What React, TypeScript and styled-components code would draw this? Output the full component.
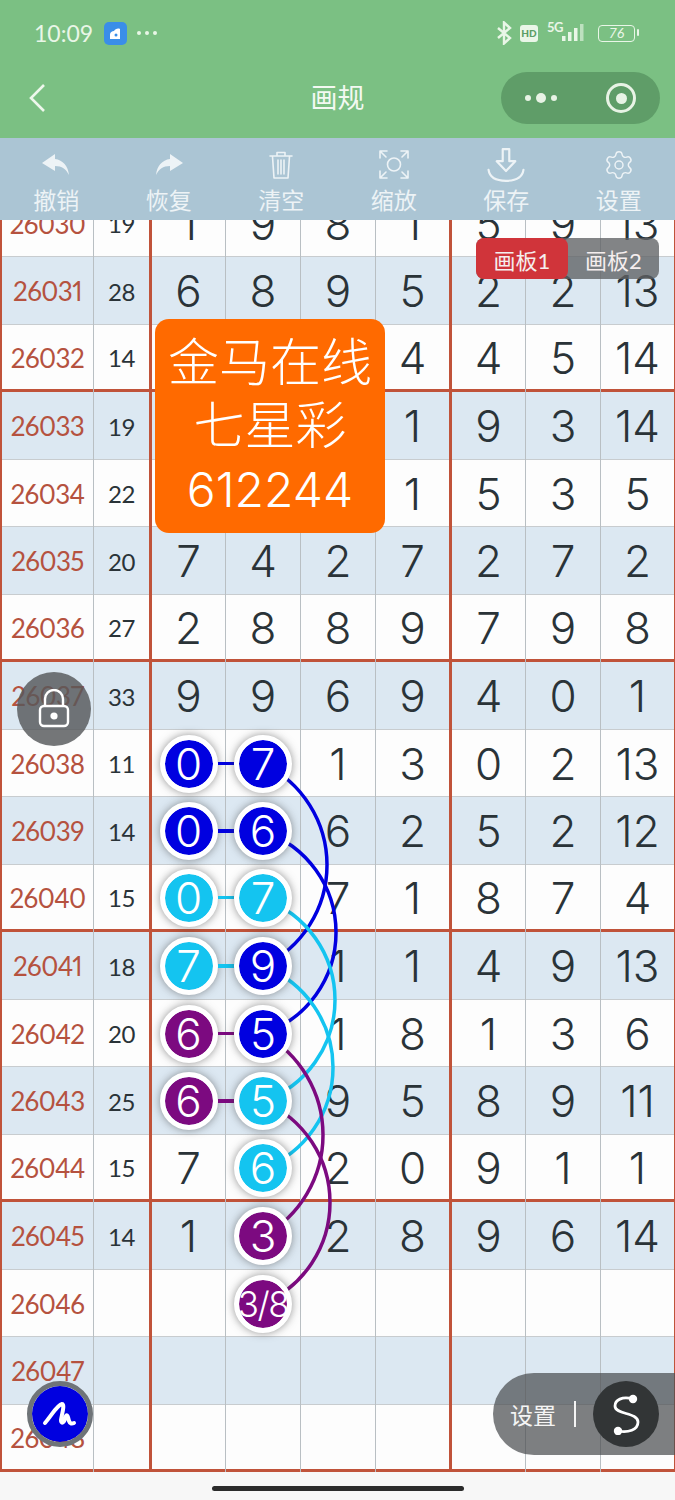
import React from "react";
import styled, { createGlobalStyle } from "styled-components";
import { Settings } from "lucide-react";

const ROW_H = 67.5;
const BLUE = "#0000e0";
const CYAN = "#14c4f0";
const PURPLE = "#7c0a80";

interface RowType {
  id: number;
  sum?: number;
  nums: (number | string | null)[];
  end?: boolean;
}

const rows: RowType[] = [
  { id: 26030, sum: 19, nums: [1, 9, 8, 1, 5, 9, 13] },
  { id: 26031, sum: 28, nums: [6, 8, 9, 5, 2, 2, 13] },
  { id: 26032, sum: 14, nums: [null, null, null, 4, 4, 5, 14], end: true },
  { id: 26033, sum: 19, nums: [null, null, null, 1, 9, 3, 14] },
  { id: 26034, sum: 22, nums: [null, null, null, 1, 5, 3, 5] },
  { id: 26035, sum: 20, nums: [7, 4, 2, 7, 2, 7, 2] },
  { id: 26036, sum: 27, nums: [2, 8, 8, 9, 7, 9, 8], end: true },
  { id: 26037, sum: 33, nums: [9, 9, 6, 9, 4, 0, 1] },
  { id: 26038, sum: 11, nums: [0, 7, 1, 3, 0, 2, 13] },
  { id: 26039, sum: 14, nums: [0, 6, 6, 2, 5, 2, 12] },
  { id: 26040, sum: 15, nums: [0, 7, 7, 1, 8, 7, 4], end: true },
  { id: 26041, sum: 18, nums: [7, 9, 1, 1, 4, 9, 13] },
  { id: 26042, sum: 20, nums: [6, 5, 1, 8, 1, 3, 6] },
  { id: 26043, sum: 25, nums: [6, 5, 9, 5, 8, 9, 11] },
  { id: 26044, sum: 15, nums: [7, 6, 2, 0, 9, 1, 1], end: true },
  { id: 26045, sum: 14, nums: [1, 3, 2, 8, 9, 6, 14] },
  { id: 26046, nums: [null, "3/8", null, null, null, null, null] },
  { id: 26047, nums: [null, null, null, null, null, null, null] },
  { id: 26048, nums: [null, null, null, null, null, null, null], end: true },
];

// 标记的球: 行id -> [第一列颜色, 第二列颜色]
const marks: Record<number, (string | null)[]> = {
  26038: [BLUE, BLUE],
  26039: [BLUE, BLUE],
  26040: [CYAN, CYAN],
  26041: [CYAN, BLUE],
  26042: [PURPLE, BLUE],
  26043: [PURPLE, CYAN],
  26044: [null, CYAN],
  26045: [null, PURPLE],
  26046: [null, PURPLE],
};

const curves = [
  { from: 26038, color: BLUE, sag: 64 },
  { from: 26039, color: BLUE, sag: 73 },
  { from: 26040, color: CYAN, sag: 72 },
  { from: 26041, color: CYAN, sag: 70 },
  { from: 26042, color: PURPLE, sag: 60 },
  { from: 26043, color: PURPLE, sag: 67 },
];

const GlobalStyle = createGlobalStyle`
  html, body {
    margin: 0;
    padding: 0;
    background: #f7f7f7;
    font-family: "Lato", "Noto Sans CJK SC", sans-serif;
  }
`;

const Page = styled.div`
  position: relative;
  width: 675px;
  height: 1500px;
  display: flex;
  flex-direction: column;
  overflow: hidden;
`;

const Header = styled.header`
  background: #7bc083;
  color: #fff;
  height: 138px;
  flex: none;
`;

const StatusBar = styled.div`
  height: 66px;
  padding: 0 40px 0 34px;
  display: flex;
  align-items: center;
  justify-content: space-between;
  color: #e9f6e7;
`;

const StatusGroup = styled.div`
  display: flex;
  align-items: center;
`;

const Time = styled.span`
  font-size: 23px;
  margin-right: 11px;
`;

const AppIcon = styled.span`
  width: 23px;
  height: 23px;
  border-radius: 5px;
  background: #3a8ee8;
  display: flex;
  align-items: center;
  justify-content: center;
  margin-right: 10px;
`;

const Dots = styled.span`
  display: flex;
  gap: 4px;
  i {
    width: 4px;
    height: 4px;
    border-radius: 50%;
    background: #e9f6e7;
  }
`;

const HdBadge = styled.span`
  width: 18px;
  height: 17px;
  margin: 0 9px 0 8px;
  border-radius: 3px;
  background: #eaf6e8;
  color: #5c9e66;
  font-size: 10px;
  font-weight: 900;
  display: flex;
  align-items: center;
  justify-content: center;
`;

const Net = styled.span`
  width: 15px;
  font-size: 13px;
  font-weight: 700;
  line-height: 12px;
  letter-spacing: -0.5px;
  align-self: flex-start;
`;

const Battery = styled.span`
  width: 37px;
  height: 17px;
  margin-left: 14px;
  box-sizing: border-box;
  border: 1.5px solid #e9f6e7;
  border-radius: 4px;
  font-size: 14px;
  font-style: italic;
  line-height: 14px;
  text-align: center;
  position: relative;
  &::after {
    content: "";
    position: absolute;
    right: -5px;
    top: 3px;
    width: 2px;
    height: 7px;
    border-radius: 1px;
    background: #e9f6e7;
  }
`;

const NavBar = styled.div`
  height: 72px;
  display: grid;
  grid-template-columns: minmax(0, 1fr) auto minmax(0, 1fr);
  align-items: center;
  padding: 0 15px 8px 15px;
  box-sizing: border-box;
  > svg {
    margin-left: 13px;
  }
`;

const Title = styled.h1`
  margin: 0 0 4px;
  font-size: 27px;
  font-weight: 400;
  color: #f3f9f2;
`;

const Capsule = styled.div`
  justify-self: end;
  width: 159px;
  height: 52px;
  border-radius: 26px;
  background: #5f9d68;
  display: flex;
  align-items: center;
  justify-content: space-between;
  padding: 0 24px 0 24px;
  box-sizing: border-box;
`;

const CapsuleDots = styled.span`
  display: flex;
  align-items: center;
  gap: 5px;
  i {
    width: 6px;
    height: 6px;
    border-radius: 50%;
    background: #e8f3e5;
  }
  i:nth-child(2) {
    width: 10px;
    height: 10px;
  }
`;

const Target = styled.span`
  width: 30px;
  height: 30px;
  box-sizing: border-box;
  border: 3.5px solid #e8f3e5;
  border-radius: 50%;
  display: flex;
  align-items: center;
  justify-content: center;
  &::after {
    content: "";
    width: 11px;
    height: 11px;
    border-radius: 50%;
    background: #e8f3e5;
  }
`;

const Toolbar = styled.nav`
  height: 82px;
  flex: none;
  background: #abc5d4;
  display: grid;
  grid-template-columns: repeat(6, 1fr);
  position: relative;
  z-index: 3;
`;

const ToolItem = styled.div`
  height: 82px;
  display: flex;
  flex-direction: column;
  align-items: center;
  color: #edf3f6;
  font-size: 23px;
  line-height: 30px;
`;

const ToolIcon = styled.span`
  height: 36px;
  margin-top: 9px;
  margin-bottom: 2px;
  display: flex;
  align-items: center;
`;

const Viewport = styled.main`
  height: 1252px;
  flex: none;
  overflow: hidden;
`;

const Table = styled.div`
  position: relative;
  margin-top: -30.5px;
`;

const Row = styled.div<{ $odd: boolean; $end?: boolean }>`
  height: ${ROW_H}px;
  box-sizing: border-box;
  display: grid;
  grid-template-columns: 94px 58px 74px 75px 75px 76px 74px 75px 74px;
  background: ${(p) => (p.$odd ? "#dce8f2" : "#fdfdfd")};
  border-bottom: ${(p) => (p.$end ? "3px solid #c0533a" : "1.5px solid #c8cccf")};
`;

const Cell = styled.div<{ $heavy?: boolean; $edge?: boolean }>`
  display: flex;
  align-items: center;
  justify-content: center;
  box-sizing: border-box;
  margin-bottom: -3px;
  padding-bottom: 1.5px;
  border-right: ${(p) =>
    p.$heavy
      ? "3px solid #c0533a"
      : p.$edge
        ? "1.5px solid #c0533a"
        : "1.5px solid #b9bfc3"};
`;

const IdCell = styled(Cell)`
  border-left: 2px solid #c0533a;
  color: #b5523f;
  font-size: 26px;
  letter-spacing: -0.6px;
  font-variant-numeric: proportional-nums;
`;

const SumCell = styled(Cell)`
  color: #2a3338;
  font-size: 24px;
  letter-spacing: -0.5px;
`;

const NumCell = styled(Cell)`
  color: #2a3338;
  font-family: "Inter", "Noto Sans CJK SC", sans-serif;
  font-size: 44px;
  font-weight: 300;
`;

const Ball = styled.span<{ $color: string; $link?: boolean; $small?: boolean }>`
  position: relative;
  z-index: 2;
  flex: none;
  width: 58px;
  height: 58px;
  box-sizing: border-box;
  border: 5px solid #fff;
  border-radius: 50%;
  background: ${(p) => p.$color};
  background-clip: padding-box;
  color: #fff;
  font-size: ${(p) => (p.$small ? "35px" : "44px")};
  font-weight: 300;
  letter-spacing: ${(p) => (p.$small ? "-1.5px" : "0")};
  white-space: nowrap;
  display: flex;
  align-items: center;
  justify-content: center;
  box-shadow: 0 0 8px rgba(60, 60, 60, 0.55);
  &::after {
    content: "";
    display: ${(p) => (p.$link ? "block" : "none")};
    position: absolute;
    left: 100%;
    top: 50%;
    margin: -2px 0 0 5px;
    width: 16px;
    height: 3.5px;
    background: ${(p) => p.$color};
  }
`;

const Curves = styled.svg`
  position: absolute;
  left: 0;
  top: 0;
  z-index: 1;
  pointer-events: none;
`;

const Tabs = styled.div`
  position: absolute;
  left: 476px;
  top: 238px;
  width: 183px;
  height: 41px;
  z-index: 4;
  display: flex;
  border-radius: 8px;
  background: rgba(95, 98, 100, 0.78);
`;

const Tab = styled.span<{ $active?: boolean }>`
  width: ${(p) => (p.$active ? "92px" : "91px")};
  border-radius: 8px;
  background: ${(p) => (p.$active ? "#d0343a" : "transparent")};
  color: #f5eeee;
  font-size: 22px;
  display: flex;
  align-items: center;
  justify-content: center;
`;

const PromoCard = styled.div`
  position: absolute;
  left: 155px;
  top: 319px;
  width: 230px;
  height: 214px;
  z-index: 4;
  border-radius: 14px;
  background: #ff6a00;
  color: #fff;
  font-size: 51px;
  font-family: "Inter", "Noto Sans CJK SC", sans-serif;
  font-weight: 300;
  line-height: 63px;
  text-align: center;
  padding-top: 12px;
  box-sizing: border-box;
`;

const PromoCode = styled.span`
  font-size: 48px;
`;

const LockButton = styled.div`
  position: absolute;
  left: 17px;
  top: 672px;
  width: 74px;
  height: 74px;
  z-index: 4;
  border-radius: 50%;
  background: rgba(85, 88, 90, 0.82);
  display: flex;
  align-items: center;
  justify-content: center;
`;

const PenButton = styled.div`
  position: absolute;
  left: 27px;
  top: 1381px;
  width: 66px;
  height: 66px;
  z-index: 4;
  box-sizing: border-box;
  border: 5px solid #6f7478;
  border-radius: 50%;
  background: ${BLUE};
  background-clip: padding-box;
  display: flex;
  align-items: center;
  justify-content: center;
`;

const SettingPill = styled.div`
  position: absolute;
  right: 0;
  top: 1373px;
  width: 182px;
  height: 82px;
  z-index: 4;
  box-sizing: border-box;
  padding-left: 17px;
  border-radius: 41px 0 0 41px;
  background: rgba(75, 78, 80, 0.72);
  color: #f4f4f4;
  font-size: 23px;
  display: flex;
  align-items: center;
`;

const Divider = styled.i`
  width: 1.5px;
  height: 26px;
  background: #f4f4f4;
  margin: 0 17px 0 18px;
`;

const SButton = styled.span`
  width: 66px;
  height: 66px;
  border-radius: 50%;
  background: #323536;
  display: flex;
  align-items: center;
  justify-content: center;
`;

const HomeStrip = styled.div`
  flex: 1;
  display: flex;
  align-items: flex-end;
  justify-content: center;
  padding-bottom: 9px;
  box-sizing: border-box;
  background: #f7f7f7;
`;

const HomeBar = styled.i`
  width: 252px;
  height: 5px;
  border-radius: 3px;
  background: #2b2b2b;
`;

const iconStroke = {
  fill: "none",
  stroke: "#edf3f6",
  strokeWidth: 1.6,
  strokeLinecap: "round" as const,
  strokeLinejoin: "round" as const,
};

const tools = [
  {
    label: "撤销",
    icon: (
      <svg width="30" height="32" viewBox="0 0 30 32">
        <path d="M14 5 1 14l13 8v-5c7 0 11 3 14 9-1-9-6-15-14-16z" fill="#edf3f6" />
      </svg>
    ),
  },
  {
    label: "恢复",
    icon: (
      <svg width="30" height="32" viewBox="0 0 30 32">
        <path d="M16 5l13 9-13 8v-5c-7 0-11 3-14 9 1-9 6-15 14-16z" fill="#edf3f6" />
      </svg>
    ),
  },
  {
    label: "清空",
    icon: (
      <svg width="26" height="32" viewBox="0 0 26 32" {...iconStroke}>
        <path d="M2 7h22M9 6V3.500h8V6M4.500 7.500 6 29h14l1.500-21.500M10 11v14M13 11v14M16 11v14" />
      </svg>
    ),
  },
  {
    label: "缩放",
    icon: (
      <svg width="32" height="32" viewBox="0 0 32 32" {...iconStroke}>
        <circle cx="16" cy="15.500" r="6.500" />
        <path d="M2 9V2h7M2 2l6 6M30 9V2h-7M30 2l-6 6M2 22v7h7M2 29l6-6M30 22v7h-7M30 29l-6-6" />
      </svg>
    ),
  },
  {
    label: "保存",
    icon: (
      <svg width="40" height="36" viewBox="0 0 36 33" {...iconStroke} strokeWidth={2}>
        <path d="M15 2h6v11h5.500L18 22 9.500 13H15zM2 21c1 7 7 10 16 10s15-3 16-10" />
      </svg>
    ),
  },
  {
    label: "设置",
    icon: <Settings size={32} strokeWidth={1.1} color="#edf3f6" />,
  },
];

const rowCenter = (id: number) => (id - 26030) * ROW_H + ROW_H / 2;

const arcPath = (from: number, sag: number) => {
  const y1 = rowCenter(from);
  const y2 = y1 + 3 * ROW_H;
  const half = (y2 - y1) / 2;
  const r = (half * half + sag * sag) / (2 * sag);
  return `M263 ${y1} A${r} ${r} 0 0 1 263 ${y2}`;
};

function App() {
  return (
    <Page>
      <GlobalStyle />
      <Header>
        <StatusBar>
          <StatusGroup>
            <Time>10:09</Time>
            <AppIcon>
              <svg width="15" height="15" viewBox="0 0 15 15">
                <path d="M2 13V8.500C2 6.500 4 5 6 5c1-2 4-3 6-2v10z" fill="#fff" />
                <circle cx="8" cy="9" r="1.500" fill="#3a8ee8" />
              </svg>
            </AppIcon>
            <Dots>
              <i />
              <i />
              <i />
            </Dots>
          </StatusGroup>
          <StatusGroup>
            <svg width="16" height="24" viewBox="0 0 16 24" fill="none" stroke="#e9f6e7" strokeWidth="2.400">
              <path d="M2 7l12 10-6 5.500V1.500L14 7 2 17" />
            </svg>
            <HdBadge>HD</HdBadge>
            <Net>5G</Net>
            <svg width="22" height="20" viewBox="0 0 22 20" fill="#e9f6e7">
              <rect x="0" y="13" width="3.500" height="5" />
              <rect x="6" y="9" width="3.500" height="9" />
              <rect x="12" y="5" width="3.500" height="13" />
              <rect x="18" y="1" width="3.500" height="17" opacity="0.6" />
            </svg>
            <Battery>76</Battery>
          </StatusGroup>
        </StatusBar>
        <NavBar>
          <svg width="18" height="30" viewBox="0 0 18 30" fill="none" stroke="#eef7ec" strokeWidth="2.600">
            <path d="M16 2 3 15l13 13" />
          </svg>
          <Title>画规</Title>
          <Capsule>
            <CapsuleDots>
              <i />
              <i />
              <i />
            </CapsuleDots>
            <Target />
          </Capsule>
        </NavBar>
      </Header>
      <Toolbar>
        {tools.map((tool) => (
          <ToolItem key={tool.label}>
            <ToolIcon>{tool.icon}</ToolIcon>
            {tool.label}
          </ToolItem>
        ))}
      </Toolbar>
      <Viewport>
        <Table>
          {rows.map((row) => {
            const mark = marks[row.id] ?? [];
            return (
              <Row key={row.id} $odd={row.id % 2 === 1} $end={row.end}>
                <IdCell>{row.id}</IdCell>
                <SumCell $heavy>{row.sum}</SumCell>
                {row.nums.map((num, i) => (
                  <NumCell key={i} $heavy={i === 3} $edge={i === 6}>
                    {mark[i] ? (
                      <Ball
                        $color={mark[i] as string}
                        $link={i === 0 && !!mark[1]}
                        $small={num === "3/8"}
                      >
                        {num}
                      </Ball>
                    ) : (
                      num
                    )}
                  </NumCell>
                ))}
              </Row>
            );
          })}
          <Curves width="675" height={rows.length * ROW_H}>
            {curves.map((c) => (
              <path
                key={c.from}
                d={arcPath(c.from, c.sag)}
                fill="none"
                stroke={c.color}
                strokeWidth="3.500"
              />
            ))}
          </Curves>
        </Table>
      </Viewport>
      <HomeStrip>
        <HomeBar />
      </HomeStrip>

      <Tabs>
        <Tab $active>画板1</Tab>
        <Tab>画板2</Tab>
      </Tabs>
      <PromoCard>
        金马在线
        <br />
        七星彩
        <br />
        <PromoCode>612244</PromoCode>
      </PromoCard>
      <LockButton>
        <svg width="32" height="40" viewBox="0 0 32 40" fill="none" stroke="#fff" strokeWidth="2.400">
          <path d="M7 17V10a9 9 0 0 1 18 0v7" />
          <rect x="2" y="17" width="28" height="20" rx="4" />
          <circle cx="16" cy="27" r="2.400" fill="#fff" />
        </svg>
      </LockButton>
      <PenButton>
        <svg width="36" height="30" viewBox="0 0 36 30" fill="none" stroke="#fff" strokeWidth="4" strokeLinecap="round" strokeLinejoin="round">
          <path d="M3 24C10 16 15 6 20 5c3 0 0 10-1 16 0 4 3 4 5-4 1-2 2 0 3 5 1 3 3 3 5 2" />
        </svg>
      </PenButton>
      <SettingPill>
        设置
        <Divider />
        <SButton>
          <svg width="28" height="42" viewBox="0 0 28 42" fill="none" stroke="#fff" strokeWidth="2.800">
            <path d="M21 6C10 3 3 7 3 13c0 9 23 6 23 16 0 8-10 11-20 9" />
            <circle cx="21" cy="6" r="4.200" fill="#fff" stroke="none" />
            <circle cx="6" cy="38" r="4.200" fill="#fff" stroke="none" />
          </svg>
        </SButton>
      </SettingPill>
    </Page>
  );
}

export default App;
